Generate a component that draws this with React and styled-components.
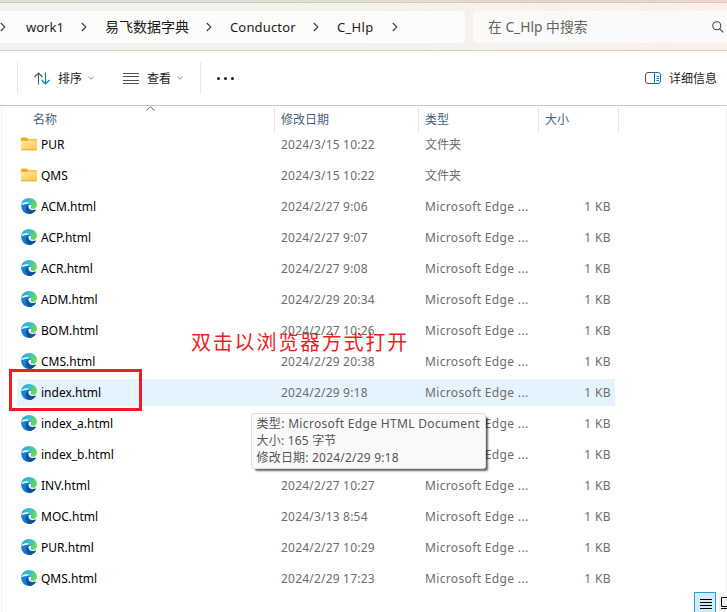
import React from "react";
import styled, { createGlobalStyle, css } from "styled-components";

const Global = createGlobalStyle`
  * { box-sizing: border-box; }
  body {
    margin: 0;
    background: #fff;
    overflow: hidden;
    font-family: "Noto Sans", "Noto Sans CJK SC", sans-serif;
    font-size: 12px;
    color: #1b1b1b;
  }
  svg { display: block; flex: none; }
`;

const Window = styled.div`
  position: relative;
  width: 727px;
  height: 612px;
  overflow: hidden;
  display: flex;
  flex-direction: column;
  background: #fff;
`;

const TitleEdge = styled.div`
  flex: none;
  height: 3px;
  background: linear-gradient(90deg, #e2dfd8, #dfdfd6 40%, #e6d6c8 75%, #f0d5c8);
  border-bottom: 1px solid #d3c9be;
`;

const AddressBar = styled.div`
  flex: none;
  height: 48px;
  padding: 8px 0 7px;
  display: flex;
  gap: 8px;
  background: linear-gradient(90deg, #f3f2f0, #f3f2ef 50%, #f6f1ec 72%, #fbefea);
  border-bottom: 1px solid #d8cfc5;
`;

const Crumbs = styled.nav`
  width: 465px;
  height: 32px;
  display: flex;
  align-items: center;
  background: #fcfcfa;
  border-radius: 0 4px 4px 0;
`;

const Crumb = styled.span`
  flex: none;
  width: ${(p) => p.$width}px;
  font-size: ${(p) => p.$size || 13}px;
  letter-spacing: ${(p) => p.$track || 0}px;
  line-height: 32px;
  white-space: nowrap;
`;

const ChevronBox = styled.span`
  flex: none;
  width: ${(p) => p.$width}px;
`;

const Search = styled.div`
  flex: 1;
  height: 32px;
  padding: 0 3px 0 15px;
  display: flex;
  align-items: center;
  justify-content: space-between;
  background: #fcfaf8;
  border-radius: 4px 0 0 4px;
  color: #626262;
  font-size: 13.8px;
  line-height: 32px;
`;

const Toolbar = styled.div`
  flex: none;
  height: 55px;
  padding: 0 10px 0 17px;
  display: flex;
  align-items: center;
  border-bottom: 1px solid #d0c5bd;
`;

const Divider = styled.span`
  width: 1px;
  height: 32px;
  margin-left: ${(p) => p.$left || 0}px;
  background: #e8e8e8;
`;

const ToolButton = styled.span`
  display: flex;
  align-items: center;
  margin-left: ${(p) => p.$left}px;
`;

const ToolLabel = styled.span`
  margin: 2px 6px 0 8px;
  line-height: 20px;
  white-space: nowrap;

  &:last-child {
    margin-right: 0;
  }
`;

const MoreDots = styled.span`
  display: flex;
  gap: 4px;
  margin: 1px auto 0 16px;
`;

const Dot = styled.span`
  width: 3px;
  height: 3px;
  border-radius: 50%;
  background: #1f1f1f;
`;

const Content = styled.main`
  flex: 1;
  margin-left: 1px;
  border-left: 1px solid #f3f3f3;
  border-right: 1px solid #f0f0f0;
`;

const columns = css`
  display: grid;
  grid-template-columns: 273px 144px 120px 80px;
`;

const HeaderRow = styled.div`
  ${columns}
  position: relative;
  height: 27px;
  margin-bottom: -4px;
  color: #44607f;
`;

const HeaderCell = styled.div`
  padding: 4px 0 0 ${(p) => p.$pad || 6}px;
  line-height: 20px;
  border-right: 1px solid #e5e5e5;
`;

const SortMark = styled.span`
  position: absolute;
  left: 144px;
  top: 0;
`;

const Row = styled.div`
  ${columns}
  height: 31px;
  align-items: center;
  width: 613px;
  color: #6d6d6d;
  line-height: 27px;
  white-space: nowrap;
  background: ${(p) =>
    p.$active
      ? "linear-gradient(#e5f3ff, #e5f3ff) 15px 2px / 598px 27px no-repeat"
      : "none"};
`;

const NameCell = styled.div`
  display: flex;
  align-items: center;
  gap: 4px;
  padding-left: 19px;
  color: #000;

  svg {
    position: relative;
    top: -1px;
  }
`;

const Cell = styled.div`
  padding-left: 6px;
  letter-spacing: ${(p) => p.$track ?? 0.2}px;
`;

const SizeCell = styled(Cell)`
  width: 72px;
  text-align: right;
`;

const Highlight = styled.div`
  position: absolute;
  left: 9px;
  top: 369px;
  width: 133px;
  height: 42px;
  border: 3px solid #ed1c24;
`;

const Note = styled.div`
  position: absolute;
  left: 191px;
  top: 328px;
  color: #ed1c24;
  font-family: "Noto Sans CJK SC", sans-serif;
  font-weight: 400;
  font-size: 20px;
  line-height: 28px;
  letter-spacing: 1.8px;
  white-space: nowrap;
`;

const Tooltip = styled.div`
  position: absolute;
  left: 251px;
  top: 413px;
  width: 235px;
  height: 56px;
  padding: 1px 4.5px;
  background: #f9f9f9;
  border: 1px solid #dcdcdc;
  border-radius: 3px;
  box-shadow: 3px 3px 2px -1px rgba(0, 0, 0, 0.6);
  color: #575757;
  line-height: 17px;
  white-space: nowrap;
`;

const TooltipLine = styled.div`
  letter-spacing: ${(p) => p.$track || 0.2}px;
`;

const ViewSwitch = styled.div`
  position: absolute;
  left: 694px;
  top: 592px;
  display: flex;
  gap: 3px;
`;

const ViewButton = styled.span`
  width: 22px;
  height: 22px;
  padding: ${(p) => (p.$on ? "0 0 0 4px" : "0 0 0 1px")};
  background: ${(p) => (p.$on ? "#d3ebf7" : "#f2f2f2")};
  border: ${(p) => (p.$on ? "1px solid #26a0da" : "0")};
`;

const Chevron = ({ width }) => (
  <ChevronBox $width={width}>
    <svg width="6" height="10" viewBox="0 0 6 10" fill="none" stroke="#3c3c3c" strokeWidth="1.1">
      <path d="M.8 1 4.8 5 .8 9" />
    </svg>
  </ChevronBox>
);

const Down = () => (
  <svg width="6" height="4" viewBox="0 0 6 4" fill="none" stroke="#8c8c8c">
    <path d="M.4.7 3 3.2 5.6.7" />
  </svg>
);

const Folder = () => (
  <svg width="16" height="14" viewBox="0 0 16 14">
    <path d="M0 1.6Q0 .5 1 .5h4.6l2 1.7H15q1 0 1 1V8H0z" fill="#f4ad14" />
    <path d="M0 4.7q0-.8.8-.8h5L7.6 3.300H15q1 0 1 1v7.900q0 1-1 1H1q-1 0-1-1z" fill="url(#folderFace)" />
    <path d="M.2 12.8h15.6" stroke="#dfa02b" strokeWidth=".8" />
  </svg>
);

const Edge = () => (
  <svg width="16" height="16" viewBox="0 0 16 16">
    <path d="M.1 7C0 12 3.500 16 8 16c3 0 5.500-1.600 7-4.200L9.500 5z" fill="url(#edgeBlue)" />
    <path d="M6 7.200C4.300 8.800 4.400 12 6.300 14.200c.8.9 1.700 1.500 2.700 1.700 2.600-.2 4.700-1.800 6-4.100l-6-2z" fill="#10529c" />
    <path d="M.1 7.300C.4 3 3.700 0 8 0c4.600 0 8 3 8 6.800 0 2.600-1.700 4.200-4.100 4.200-1.500 0-2.400-.4-2.400-1 0-.5.600-.8.600-1.800C10.100 6 8.200 4.200 5.600 4.200 3 4.200 1.100 5.400.1 7.300z" fill="url(#edgeGreen)" />
    <path d="M9.700 6.700C8.500 6.400 7.600 7.200 7.500 8.400c-.1 2 1.700 3.500 4 3.500 1.500 0 2.700-.2 3.500-.6.400-.4.700-.9.600-1.300-.9.600-2.200.9-3.500.8-1.500 0-2.500-.4-2.500-1.100 0-.6.500-.8.500-1.700 0-.5-.1-.9-.4-1.300z" fill="#fff" />
  </svg>
);

const Gradients = () => (
  <svg width="0" height="0">
    <defs>
      <linearGradient id="folderFace" x1="0" y1="0" x2="1" y2="1">
        <stop stopColor="#ffe7a2" />
        <stop offset="1" stopColor="#ffc844" />
      </linearGradient>
      <linearGradient id="edgeBlue" x1="0" y1="0" x2="1" y2="1">
        <stop offset=".25" stopColor="#1485d6" />
        <stop offset="1" stopColor="#1167b5" />
      </linearGradient>
      <linearGradient id="edgeGreen" x1="0" y1="0" x2="1" y2=".4">
        <stop stopColor="#2aa0dc" />
        <stop offset=".5" stopColor="#35bed0" />
        <stop offset="1" stopColor="#68d955" />
      </linearGradient>
    </defs>
  </svg>
);

const files = [
  ["PUR", "2024/3/15 10:22", true],
  ["QMS", "2024/3/15 10:22", true],
  ["ACM.html", "2024/2/27 9:06"],
  ["ACP.html", "2024/2/27 9:07"],
  ["ACR.html", "2024/2/27 9:08"],
  ["ADM.html", "2024/2/29 20:34"],
  ["BOM.html", "2024/2/27 10:26"],
  ["CMS.html", "2024/2/29 20:38"],
  ["index.html", "2024/2/29 9:18"],
  ["index_a.html", ""],
  ["index_b.html", ""],
  ["INV.html", "2024/2/27 10:27"],
  ["MOC.html", "2024/3/13 8:54"],
  ["PUR.html", "2024/2/27 10:29"],
  ["QMS.html", "2024/2/29 17:23"],
];

export default function App() {
  return (
    <Window>
      <Global />
      <TitleEdge />
      <AddressBar>
        <Crumbs>
          <Chevron width={26} />
          <Crumb $width={55}>work1</Crumb>
          <Chevron width={24} />
          <Crumb $width={101} $size={14}>易飞数据字典</Crumb>
          <Chevron width={24} />
          <Crumb $width={83} $track={0.15}>Conductor</Crumb>
          <Chevron width={24} />
          <Crumb $width={55} $track={0.3}>C_Hlp</Crumb>
          <Chevron width={20} />
        </Crumbs>
        <Search>
          在 C_Hlp 中搜索
          <svg width="12" height="12" viewBox="0 0 12 12" fill="none" stroke="#444" strokeWidth="1.1">
            <circle cx="4.8" cy="4.8" r="4" />
            <path d="m7.8 7.8 3.6 3.6" />
          </svg>
        </Search>
      </AddressBar>
      <Toolbar>
        <Divider />
        <ToolButton $left={16}>
          <svg width="16" height="13" viewBox="0 0 16 13" fill="none" strokeWidth="1.1">
            <path d="M4.500 12.500V1M.5 5l4-4 4 4" stroke="#555" />
            <path d="M11.500.5V12M7.500 8l4 4 4-4" stroke="#0078d4" />
          </svg>
          <ToolLabel>排序</ToolLabel>
          <Down />
        </ToolButton>
        <ToolButton $left={29}>
          <svg width="16" height="11" viewBox="0 0 16 11" stroke="#505050">
            <path d="M0 .5h16M0 3.500h16M0 7.500h16M0 10.500h16" />
          </svg>
          <ToolLabel>查看</ToolLabel>
          <Down />
        </ToolButton>
        <Divider $left={17} />
        <MoreDots>
          <Dot />
          <Dot />
          <Dot />
        </MoreDots>
        <ToolButton $left={0}>
          <svg width="16" height="12" viewBox="0 0 16 12" fill="none">
            <path d="M9.500.5H3Q.5.500.5 3v6q0 2.500 2.500 2.500h6.500" stroke="#555" />
            <path d="M9.500.5H13q2.500 0 2.500 2.500v6q0 2.500-2.500 2.500H9.500zM11.500 4.500h2.500M11.500 6.500h2.500M11.500 8.500h2.500" stroke="#0078d4" />
          </svg>
          <ToolLabel>详细信息</ToolLabel>
        </ToolButton>
      </Toolbar>
      <Content>
        <HeaderRow>
          <HeaderCell $pad={31}>名称</HeaderCell>
          <HeaderCell>修改日期</HeaderCell>
          <HeaderCell>类型</HeaderCell>
          <HeaderCell>大小</HeaderCell>
          <SortMark>
            <svg width="9" height="5" viewBox="0 0 9 5" fill="none" stroke="#666">
              <path d="M.5 4.500 4.500.8l4 3.700" />
            </svg>
          </SortMark>
        </HeaderRow>
        {files.map(([name, date, folder]) => (
          <Row key={name} $active={name === "index.html"}>
            <NameCell>
              {folder ? <Folder /> : <Edge />}
              {name}
            </NameCell>
            <Cell>{date}</Cell>
            <Cell $track={folder ? 0 : 0.35}>{folder ? "文件夹" : "Microsoft Edge ..."}</Cell>
            <SizeCell $track={0.4}>{folder ? "" : "1 KB"}</SizeCell>
          </Row>
        ))}
      </Content>
      <Gradients />
      <Highlight />
      <Note>双击以浏览器方式打开</Note>
      <Tooltip>
        <TooltipLine $track={0.33}>类型: Microsoft Edge HTML Document</TooltipLine>
        <TooltipLine>大小: 165 字节</TooltipLine>
        <TooltipLine>修改日期: 2024/2/29 9:18</TooltipLine>
      </Tooltip>
      <ViewSwitch>
        <ViewButton $on>
          <svg width="14" height="17" viewBox="0 0 14 17" stroke="#000">
            <path d="M1 6.500h12M1 9.500h12M1 12.500h12M1 15.500h12" />
          </svg>
        </ViewButton>
        <ViewButton>
          <svg width="14" height="19" viewBox="0 0 14 19" fill="none" stroke="#000">
            <path d="M1.500 5.500h11v9h-11zM1 16.500h12" />
          </svg>
        </ViewButton>
      </ViewSwitch>
    </Window>
  );
}
